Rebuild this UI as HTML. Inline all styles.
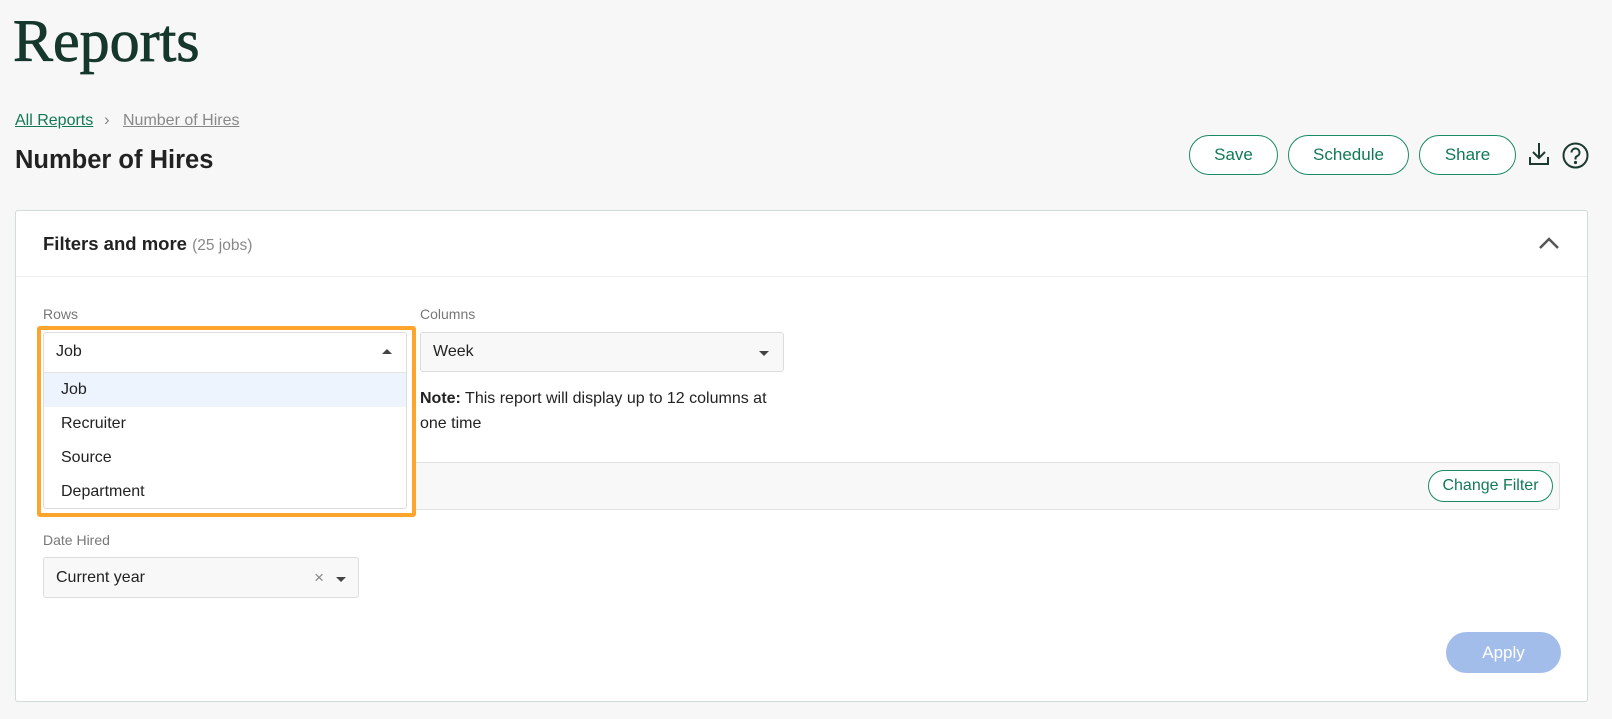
<!DOCTYPE html>
<html><head><meta charset="utf-8"><style>
*{box-sizing:border-box;margin:0;padding:0}
body{width:1612px;height:719px;background:#f7f7f7;font-family:"Liberation Sans",sans-serif;color:#222;position:relative;overflow:hidden}
.a{position:absolute}
.btn{position:absolute;border:1.5px solid #1a8a63;border-radius:22px;background:#fff;color:#117a55;font-size:17px;display:flex;align-items:center;justify-content:center}
.lbl{position:absolute;font-size:14px;color:#777}
.sel{position:absolute;border:1px solid #ddd;border-radius:3px;background:#f8f8f8;font-size:16px;display:flex;align-items:center;padding-left:12px;color:#222}
.tri{position:absolute;width:0;height:0;border-left:5px solid transparent;border-right:5px solid transparent}
.it{position:absolute;left:61px;font-size:16px}
</style></head><body>
<div class="a" style="left:13px;top:8px;font-family:'Liberation Serif',serif;font-size:60px;color:#15372c;line-height:66px;-webkit-text-stroke:0.8px #15372c">Reports</div>
<div class="a" style="left:15px;top:112px;font-size:16px;color:#117a55;text-decoration:underline">All Reports</div>
<div class="a" style="left:104px;top:110px;font-size:17px;color:#888">›</div>
<div class="a" style="left:123px;top:112px;font-size:16px;color:#888;text-decoration:underline">Number of Hires</div>
<div class="a" style="left:15px;top:146px;font-size:25.5px;font-weight:bold;color:#222">Number of Hires</div>
<div class="btn" style="left:1189px;top:135px;width:89px;height:40px">Save</div>
<div class="btn" style="left:1288px;top:135px;width:121px;height:40px">Schedule</div>
<div class="btn" style="left:1419px;top:135px;width:97px;height:40px">Share</div>
<svg class="a" style="left:1527px;top:141px" width="24" height="25" viewBox="0 0 24 25" fill="none" stroke="#1c3a30" stroke-width="2"><path d="M12 2v15M6 11l6 6 6-6M3 16v7h18v-7"/></svg>
<svg class="a" style="left:1562px;top:142px" width="27" height="27" viewBox="0 0 27 27" fill="none" stroke="#1c3a30" stroke-width="2"><circle cx="13.5" cy="13.5" r="12"/><path d="M9.5 10.5a4 4 0 1 1 5.5 3.7c-1 .5-1.5 1.2-1.5 2.3v1"/><circle cx="13.5" cy="20.5" r="0.6" fill="#1c3a30"/></svg>
<div class="a" style="left:15px;top:210px;width:1573px;height:492px;background:#fff;border:1px solid #d3dada;border-radius:3px"></div>
<div class="a" style="left:16px;top:276px;width:1571px;height:1px;background:#eee"></div>
<div class="a" style="left:43px;top:233px;font-size:18.5px;font-weight:bold;color:#222">Filters and more <span style="font-weight:normal;font-size:15.5px;color:#888">(25 jobs)</span></div>
<svg class="a" style="left:1538px;top:236px" width="22" height="14" viewBox="0 0 22 14" fill="none" stroke="#555" stroke-width="2.5"><path d="M2 12l9-9 9 9"/></svg>
<div class="lbl" style="left:43px;top:306px">Rows</div>
<div class="lbl" style="left:420px;top:306px">Columns</div>
<div class="sel" style="left:420px;top:332px;width:364px;height:40px">Week<div class="tri" style="right:14px;top:18px;border-top:5px solid #444"></div></div>
<div class="a" style="left:420px;top:386px;font-size:16px;line-height:25px;width:366px"><b>Note:</b> This report will display up to 12 columns at one time</div>
<div class="a" style="left:405px;top:462px;width:1155px;height:48px;background:#f8f8f8;border:1px solid #e2e2e2;border-radius:3px"></div>
<div class="btn" style="left:1428px;top:470px;width:125px;height:32px;font-size:16px">Change Filter</div>
<div class="a" style="left:37px;top:326px;width:379px;height:191px;border:4px solid #ffa42c;border-radius:3px;background:#fff"></div>
<div class="a" style="left:43px;top:332px;width:364px;height:177px;border:1px solid #ddd;border-radius:3px;background:#fff"></div>
<div class="a" style="left:56px;top:343px;font-size:16px">Job</div>
<div class="tri" style="left:382px;top:349px;border-bottom:5px solid #444"></div>
<div class="a" style="left:44px;top:372px;width:362px;height:1px;background:#e4e4e4"></div>
<div class="a" style="left:44px;top:373px;width:362px;height:34px;background:#edf4fe"></div>
<div class="it" style="top:381px">Job</div>
<div class="it" style="top:415px">Recruiter</div>
<div class="it" style="top:449px">Source</div>
<div class="it" style="top:483px">Department</div>
<div class="lbl" style="left:43px;top:532px">Date Hired</div>
<div class="sel" style="left:43px;top:557px;width:316px;height:41px">Current year<span class="a" style="right:34px;top:10px;color:#888;font-size:17px">×</span><div class="tri" style="right:12px;top:19px;border-top:5px solid #444"></div></div>
<div class="a" style="left:1446px;top:632px;width:115px;height:41px;border-radius:21px;background:#a3bdeb;color:#fff;font-size:17px;display:flex;align-items:center;justify-content:center">Apply</div>
</body></html>
